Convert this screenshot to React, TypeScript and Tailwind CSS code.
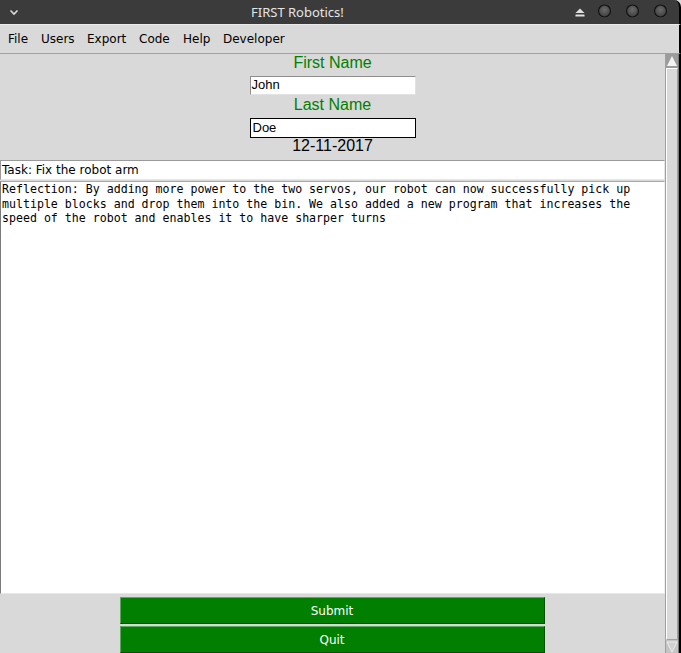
import React from "react";

const dv = { fontFamily: '"DejaVu Sans", sans-serif' };
const lib = { fontFamily: '"Liberation Sans", Arial, sans-serif' };
const mono = { fontFamily: '"DejaVu Sans Mono", monospace' };

function Circle() {
  return (
    <svg width="15" height="15" viewBox="0 0 15 15">
      <defs>
        <radialGradient id="g" cx="50%" cy="40%" r="60%">
          <stop offset="0%" stopColor="#6a6a6a" />
          <stop offset="100%" stopColor="#3e3e3e" />
        </radialGradient>
      </defs>
      <circle cx="7.5" cy="7.5" r="6.8" fill="#5a5a5a" opacity="0.6" />
      <circle cx="7.5" cy="7" r="6" fill="url(#g)" stroke="#111" strokeWidth="1.2" />
    </svg>
  );
}

export default function App() {
  const menus: [string, string][] = [
    ["File", "w-[33px]"],
    ["Users", "w-[46px]"],
    ["Export", "w-[52px]"],
    ["Code", "w-[44px]"],
    ["Help", "w-[40px]"],
    ["Developer", ""],
  ];
  return (
    <div className="w-[681px] h-[653px] flex flex-col bg-[#d9d9d9] overflow-hidden">
      {/* Title bar */}
      <div className="relative h-[24px] bg-[#3b3b3b] rounded-tr-[7px] border-r-2 border-black">
        <svg className="absolute left-[9px] top-[9px]" width="10" height="7" viewBox="0 0 10 7">
          <path d="M1.5 1.5 L5 5 L8.5 1.5" stroke="#dcdcdc" strokeWidth="1.6" fill="none" />
        </svg>
        <div
          className="absolute left-[251px] top-0 h-[24px] leading-[24px] text-[13px] text-[#e4e4e4]"
          style={{ fontFamily: '"Noto Sans", sans-serif' }}
        >
          FIRST Robotics!
        </div>
        <svg className="absolute left-[575px] top-[8px]" width="10" height="9" viewBox="0 0 10 9">
          <path d="M5 0.5 L9.5 5 L0.5 5 Z" fill="#e0e0e0" />
          <rect x="0.5" y="6.5" width="9" height="2" fill="#e0e0e0" />
        </svg>
        <div className="absolute left-[597px] top-[4px] flex gap-[13px]">
          <Circle />
          <Circle />
          <Circle />
        </div>
      </div>
      {/* Menu bar */}
      <div className="h-[30px] flex items-center pl-[2px] border-t border-[#ececec] border-b border-b-[#a0a0a0] border-r-2 border-r-black">
        {menus.map(([m, w]) => (
          <span key={m} className={`${w} pl-[6px] text-[12px] text-black`} style={dv}>
            {m}
          </span>
        ))}
      </div>
      {/* Body */}
      <div className="flex flex-1 min-h-0">
        <div className="w-[665px] flex flex-col">
          <div className="h-[18px] leading-[18px] text-[16px] text-[#008000] text-center" style={lib}>
            First Name
          </div>
          <div className="mt-[4px] flex justify-center">
            <div
              className="w-[166px] h-[19px] bg-white border border-t-[#8e8e8e] border-l-[#8e8e8e] border-r-[#e2e2e2] border-b-[#e2e2e2] text-[13px] leading-[16px] pl-[1px] text-black"
              style={lib}
            >
              John
            </div>
          </div>
          <div className="mt-[1px] h-[18px] leading-[18px] text-[16px] text-[#008000] text-center" style={lib}>
            Last Name
          </div>
          <div className="mt-[4px] flex justify-center">
            <div
              className="w-[166px] h-[20px] bg-white border border-black text-[13px] leading-[18px] pl-[2px] text-black"
              style={lib}
            >
              Doe
            </div>
          </div>
          <div className="h-[16px] leading-[16px] text-[16px] text-black text-center" style={lib}>
            12-11-2017
          </div>
          <div
            className="mt-[6px] h-[20px] bg-white border border-t-[#9a9a9a] border-l-[#9a9a9a] border-r-[#e6e6e6] border-b-[#e6e6e6] text-[12px] leading-[18px] pl-[1px] text-black"
            style={dv}
          >
            Task: Fix the robot arm
          </div>
          <div
            className="mt-[1px] flex-1 bg-white border border-t-[#a8a8a8] border-l-[#7a7a7a] border-r-[#f0f0f0] border-b-[#e8e8e8] pl-[1px] text-[11.6px] leading-[14.5px] text-black"
            style={mono}
          >
            <div className="whitespace-pre">Reflection: By adding more power to the two servos, our robot can now successfully pick up</div>
            <div className="whitespace-pre">multiple blocks and drop them into the bin. We also added a new program that increases the</div>
            <div className="whitespace-pre">speed of the robot and enables it to have sharper turns</div>
          </div>
          <div className="pt-[3px] flex flex-col items-center gap-[2px]">
            <div
              className="ml-[-1px] w-[425px] h-[27px] bg-[#007f00] border border-t-[#5aa85a] border-l-[#5aa85a] border-r-[#004d00] border-b-[#004d00] text-white text-[12px] flex items-center justify-center"
              style={dv}
            >
              Submit
            </div>
            <div
              className="ml-[-1px] w-[425px] h-[27px] bg-[#007f00] border border-t-[#5aa85a] border-l-[#5aa85a] border-r-[#004d00] border-b-[#004d00] text-white text-[12px] flex items-center justify-center"
              style={dv}
            >
              Quit
            </div>
          </div>
        </div>
        {/* Scrollbar */}
        <div className="w-[13px] flex flex-col border-l border-[#a0a0a0] bg-[#d9d9d9]">
          <div className="h-[14px] bg-[#9c9c9c] flex items-center justify-center">
            <svg width="12" height="12" viewBox="0 0 12 12">
              <path d="M6 1 L11 11 L1 11 Z" fill="#f4f4f4" />
            </svg>
          </div>
          <div className="flex-1 border border-[#a0a0a0] border-t-white border-l-white bg-[#d9d9d9]" />
          <div className="h-[13px] bg-[#c4c4c4] flex items-center justify-center">
            <svg width="12" height="12" viewBox="0 0 12 12">
              <path d="M1 1 L11 1 L6 11 Z" fill="#d0d0d0" stroke="#eeeeee" strokeWidth="1" />
            </svg>
          </div>
        </div>
        <div className="w-[1px] bg-[#7a7a7a]" />
        <div className="w-[2px] bg-black" />
      </div>
    </div>
  );
}
